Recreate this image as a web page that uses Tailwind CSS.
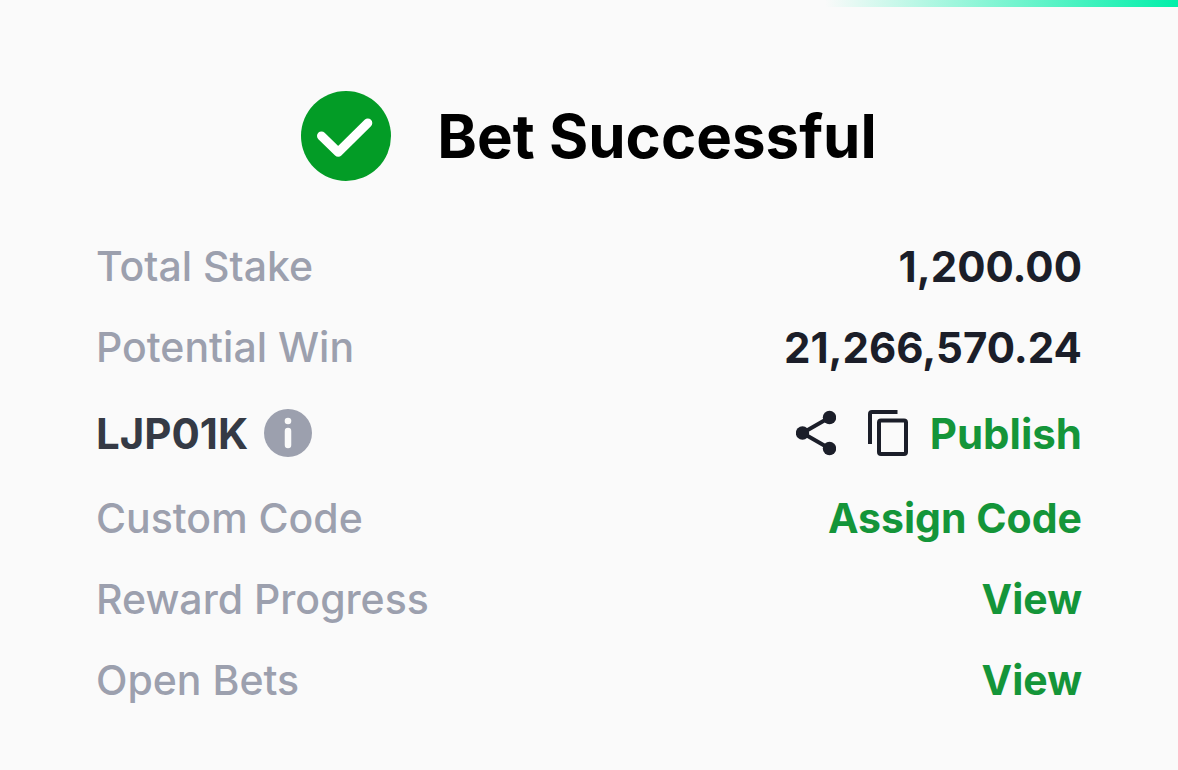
<!DOCTYPE html>
<html lang="en">
<head>
  <meta charset="UTF-8" />
  <meta name="viewport" content="width=device-width, initial-scale=1.0" />
  <title>Bet Successful</title>
  <script src="https://cdn.jsdelivr.net/npm/@tailwindcss/browser@4"></script>
</head>
<body class="min-h-screen bg-[#fafafa] font-['Inter',sans-serif]">
  <!-- progress bar -->
  <div class="ml-auto h-[7px] w-[30%] bg-linear-to-r/srgb from-[#fafafa] to-[#00efa9]"></div>

  <main class="px-24 pt-[84px]">
    <header class="flex items-center justify-center gap-[46px]">
      <svg class="size-[90px] shrink-0" viewBox="0 0 90 90" fill="none" aria-hidden="true">
        <circle cx="45" cy="45" r="45" fill="#039c26" />
        <path d="M20.500 45L37.200 61.200L66.800 32" stroke="#fff" stroke-width="9" stroke-linecap="round" stroke-linejoin="round" />
      </svg>
      <h1 class="text-[60px] leading-[90px] font-bold text-black">Bet Successful</h1>
    </header>

    <dl class="mt-[45px] text-[41px] leading-[81px] font-medium text-[#9ca0ae]">
      <div class="flex items-center justify-between">
        <dt>Total Stake</dt>
        <dd class="text-[42px] font-bold text-[#1b1e29]">1,200.00</dd>
      </div>
      <div class="flex items-center justify-between">
        <dt>Potential Win</dt>
        <dd class="text-[42px] font-bold text-[#1b1e29]">21,266,570.24</dd>
      </div>
      <div class="flex h-[90px] items-center justify-between">
        <dt class="flex items-center gap-4 text-[42px] font-bold text-[#353a45]">
          LJP01K
          <button type="button" aria-label="About booking code">
            <svg class="size-12" viewBox="0 0 48 48" fill="none" aria-hidden="true">
              <circle cx="24" cy="24" r="24" fill="#9ca0ae" />
              <circle cx="24" cy="12" r="3.300" fill="#fafafa" />
              <path d="M24 22V36" stroke="#fafafa" stroke-width="6.500" stroke-linecap="round" />
            </svg>
          </button>
        </dt>
        <dd class="flex items-center text-[42px] font-bold text-[#149539]">
          <button type="button" aria-label="Share" class="mr-8">
            <svg class="h-12 w-10" viewBox="0 0 40 48" aria-hidden="true">
              <path d="M33.500 8.500L6.500 24L33.500 39.500" fill="none" stroke="#1b1e29" stroke-width="4" />
              <g fill="#1b1e29">
                <circle cx="33.500" cy="8.500" r="6.700" />
                <circle cx="6.500" cy="24" r="6.700" />
                <circle cx="33.500" cy="39.500" r="6.700" />
              </g>
            </svg>
          </button>
          <button type="button" aria-label="Copy code" class="mr-[22px]">
            <svg class="h-12 w-10" viewBox="0 0 40 48" fill="none" stroke="#1b1e29" stroke-width="4" aria-hidden="true">
              <path d="M2 35V5Q2 3 4 3H29.500" />
              <rect x="11" y="11.500" width="27" height="33.500" rx="2" />
            </svg>
          </button>
          <button type="button">Publish</button>
        </dd>
      </div>
      <div class="flex items-center justify-between">
        <dt>Custom Code</dt>
        <dd class="font-bold text-[#149539]"><button type="button">Assign Code</button></dd>
      </div>
      <div class="flex items-center justify-between">
        <dt>Reward Progress</dt>
        <dd class="font-bold text-[#149539]"><a href="#">View</a></dd>
      </div>
      <div class="flex items-center justify-between">
        <dt>Open Bets</dt>
        <dd class="font-bold text-[#149539]"><a href="#">View</a></dd>
      </div>
    </dl>
  </main>
</body>
</html>
